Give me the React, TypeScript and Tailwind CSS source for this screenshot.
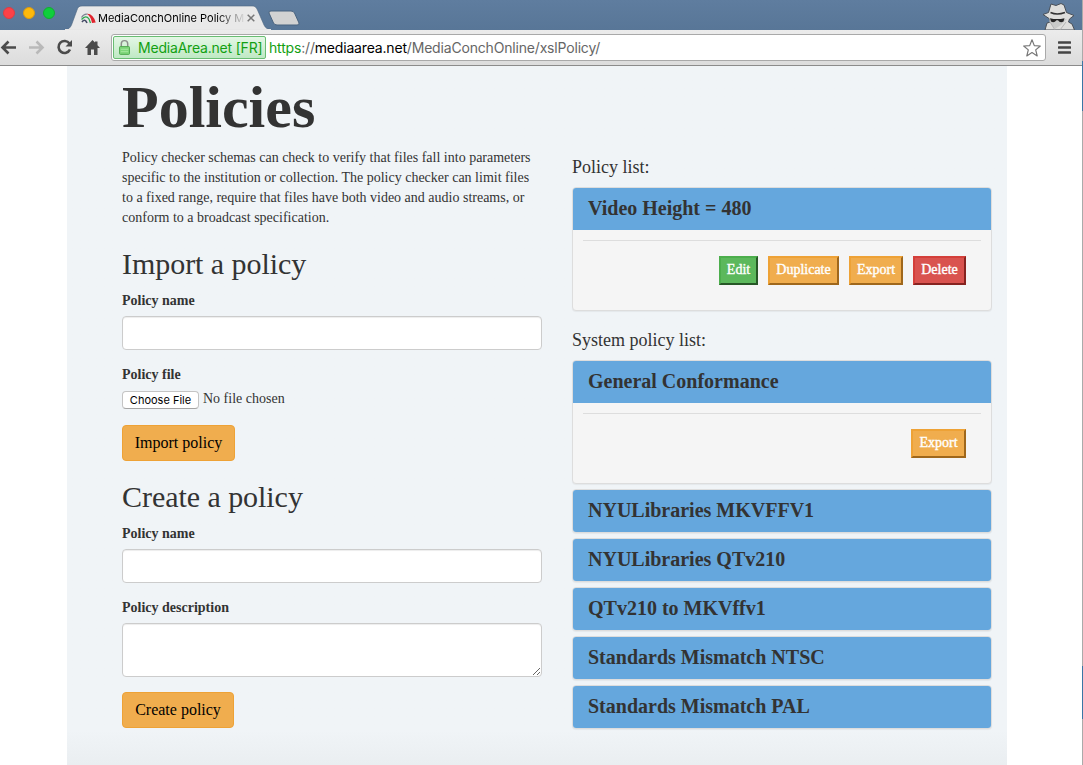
import type { ReactNode } from 'react';

function Tab() {
  return (
    <div className="relative flex h-[30px] w-[208px] items-start">
      <svg className="absolute inset-0" width="208" height="30" viewBox="0 0 208 30">
        <path d="M0 29.5 C4 29 5 28 6.500 25 L12 10 C13 7 14 6 17 6 L187 6 C190 6 191 7 192.500 10 L199 25 C200.500 28 202 29 206 29.500 Z" fill="#e9e9e9" stroke="#4b6480" strokeWidth="0.6" />
        <path d="M0 29 H206 V30 H0 Z" fill="#e6e6e6" />
      </svg>
      <div className="relative flex h-[25px] w-full items-center pt-[11px] pl-[16px]">
        <svg className="shrink-0" width="15" height="11" viewBox="0 0 15 11" fill="none">
          <path d="M.5 4.500 Q3 .5 6.500 1.300" stroke="#7d8592" strokeWidth="1.100" />
          <path d="M.5 6.500 Q5 1.500 8 6 L9.500 10" stroke="#2fa84f" strokeWidth="1.300" />
          <path d="M1 9 Q4 5 6 10" stroke="#454b66" strokeWidth="1.600" />
          <path d="M6 .8 Q12 .5 14.700 9.500 L11 10 Q10 4 6 .8Z" fill="#e0232c" />
        </svg>
        <div className="ml-0.5 w-[149px] shrink-0 whitespace-nowrap font-['Inter',sans-serif] text-[11px] leading-[14px] text-black [mask-image:linear-gradient(to_right,black_118px,transparent_148px)]">
          MediaConchOnline Policy M
        </div>
        <svg className="shrink-0" width="8" height="8" viewBox="0 0 8 8" stroke="#777" strokeWidth="1.500">
          <path d="M.7.7 7.300 7.300M7.300.7.7 7.300" />
        </svg>
      </div>
    </div>
  );
}

function TitleBar() {
  return (
    <div className="flex h-[30px] bg-linear-to-b from-[#5f7d9f] to-[#587697]">
      <div className="flex w-[65px] gap-[8px] pt-[7px] pl-[3px]">
        <span className="size-3 shrink-0 rounded-full border border-[#dc3d43] bg-[#fc4148]" />
        <span className="size-3 shrink-0 rounded-full border border-[#dc9b10] bg-[#fdb90b]" />
        <span className="size-3 shrink-0 rounded-full border border-[#12ae30] bg-[#0fce3c]" />
      </div>
      <Tab />
      <svg className="-ml-[5px] mt-[10px]" width="32" height="16" viewBox="0 0 32 16">
        <path d="M3 1 H23 Q25.500 1 26.500 3 L31 13 Q31.500 15 29 15 H9 Q6.500 15 5.500 13 L1 3 Q.5 1 3 1Z" fill="#d2d2d2" stroke="#48627e" />
      </svg>
      <svg className="mt-[2px] mr-[6px] ml-auto" width="34" height="28" viewBox="0 0 34 28">
        <path d="M6.500 10.500 L9 2 L14 3.500 L19 1.500 L22 3 L24.500 10.500 L32 13.500 L27.500 17 L26.500 20 L30 22 L32.500 28 H3 L5 21 L8.500 20 L7 16.500 L1 12.500Z" fill="#dededc" stroke="#4a5058" strokeWidth="1" />
        <path d="M7.500 17 V20 L13 27 L19 23 L25 17Z" fill="#c9cac9" />
        <path d="M8.500 10.500 Q15 13.500 23 10.500" stroke="#333" strokeWidth="1.400" fill="none" />
        <path d="M8 16.200 Q15 18 22.500 16.200 L21.500 19.500 Q18 21.500 16 18.200 H14.500 Q12 21.500 9 19.500Z" fill="#252525" />
        <path d="M8 20 L13 28 M24 20 L18 28" stroke="#aaa" strokeWidth="0.800" />
      </svg>
    </div>
  );
}

function Toolbar() {
  return (
    <div className="flex h-9 items-center border-b border-[#8b8b8b] bg-linear-to-b from-[#ececec] to-[#dcdcdc]">
      <svg width="111" height="35" viewBox="0 0 111 35" fill="none">
        <path d="M16 17.500H3M8.500 11.500 2.500 17.500 8.500 23.500" stroke="#4b4b4b" strokeWidth="2.600" />
        <path d="M29 17.500H42M36.500 11.500 42.500 17.500 36.500 23.500" stroke="#b9b9b9" strokeWidth="2.600" />
        <path d="M69.500 13.500A6 6 0 1 0 70 19.500" stroke="#4b4b4b" strokeWidth="2.600" />
        <path d="M72 10V16.500H65.500Z" fill="#4b4b4b" />
        <path d="M85 18 92.500 10 95 12.500V11.500H97.500V15.200L100 18H97.500V25H94V19.500H91V25H87.500V18Z" fill="#4b4b4b" />
      </svg>
      <div className="flex h-[27px] w-[935px] items-center rounded-[3px] border border-[#a9a9a9] bg-white font-['Inter',sans-serif] text-[14px] whitespace-nowrap">
        <div className="ml-px flex h-[23px] w-[153px] items-center rounded-[2px] border border-[#69bd73] bg-linear-to-b from-[#e4f7e5] to-[#bfe9c4] pl-[5px]">
          <svg width="11" height="17" viewBox="0 0 12 17">
            <path d="M2.500 8V4.500a3.500 3.500 0 0 1 7 0V8" fill="none" stroke="#8a8f8a" strokeWidth="1.600" />
            <rect x=".5" y="7.500" width="11" height="8.500" rx="1" fill="#7ed67a" stroke="#4aa54a" />
            <path d="M2 10.500H10M2 13H10" stroke="#a5e8a0" />
          </svg>
          <span className="ml-[8px] tracking-[-0.2px] text-[#12a012]">MediaArea.net [FR]</span>
        </div>
        <span className="ml-[3px] tracking-[-0.18px] text-[#666]">
          <span className="text-[#12a012]">https</span>://<span className="text-black">mediaarea.net</span>/MediaConchOnline/xslPolicy/
        </span>
        <svg className="mr-[3px] ml-auto" width="20" height="20" viewBox="0 0 20 20">
          <path d="M10 1.800 12.300 7.600 18.300 8 13.700 11.900 15.200 17.900 10 14.600 4.800 17.900 6.300 11.900 1.700 8 7.700 7.600Z" fill="#fff" stroke="#777" strokeWidth="1.200" strokeLinejoin="round" />
        </svg>
      </div>
      <svg className="ml-3" width="13" height="13" viewBox="0 0 13 13">
        <path d="M1 1.500H12M1 6.500H12M1 11.500H12" stroke="#444" strokeWidth="2.600" strokeLinecap="round" />
      </svg>
    </div>
  );
}

const tones = {
  green: 'border-t-[#4cae4c] border-l-[#4cae4c] border-r-[#265726] border-b-[#265726] bg-[#5cb85c]',
  orange: 'border-t-[#eea236] border-l-[#eea236] border-r-[#9f671b] border-b-[#9f671b] bg-[#f0ad4e]',
  red: 'border-t-[#d43f3a] border-l-[#d43f3a] border-r-[#862320] border-b-[#862320] bg-[#d9534f]',
};

function Action({ tone, width, children }: { tone: keyof typeof tones; width: string; children: ReactNode }) {
  return (
    <button className={`h-[29px] border-2 pb-[2px] text-center text-[14px] leading-[23px] text-white [-webkit-text-stroke:0.4px_white] ${width} ${tones[tone]}`}>
      {children}
    </button>
  );
}

function Panel({ title, children }: { title: string; children?: ReactNode }) {
  return (
    <section className="mb-[5px] overflow-hidden rounded-[4px] border border-[#ddd] bg-[#f5f5f5] shadow-[0_1px_1px_rgba(0,0,0,0.05)]">
      <h4 className="h-[42px] bg-[#65a7dd] pl-[15px] text-[20px] leading-[41px] font-bold">{title}</h4>
      {children && (
        <div className="h-20 px-2.5 pt-2.5">
          <div className="flex justify-end gap-2.5 border-t border-[#ddd] pt-[15px] pr-[15px]">{children}</div>
        </div>
      )}
    </section>
  );
}

const field = 'block w-full rounded-[4px] border border-[#ccc] bg-white shadow-[inset_0_1px_1px_rgba(0,0,0,0.075)]';
const submit = 'block h-9 rounded-[4px] border border-[#eea236] bg-[#f0ad4e] text-[16px] leading-[34px] text-black';

function Forms() {
  return (
    <div className="w-[420px] shrink-0">
      <p className="h-[100px] pt-px text-[14px] leading-5 whitespace-nowrap">
        Policy checker schemas can check to verify that files fall into parameters<br />
        specific to the institution or collection. The policy checker can limit files<br />
        to a fixed range, require that files have both video and audio streams, or<br />
        conform to a broadcast specification.
      </p>
      <h2 className="mb-[11px] text-[30px] leading-[33px] tracking-[-0.05px]">Import a policy</h2>
      <label className="mb-[5px] block text-[14px] leading-5 font-bold">Policy name</label>
      <input className={`${field} mb-[15px] h-[34px]`} />
      <label className="mb-[5px] block text-[14px] leading-5 font-bold">Policy file</label>
      <div className="flex h-[35px] items-start gap-1 text-[14px]">
        <button className="mt-px h-[18px] w-[77px] rounded-[4px] border border-[#c4c4c4] border-b-[#a5a5a5] bg-white font-['Inter',sans-serif] text-[11px] leading-[16px] text-black">Choose File</button>
        <span className="leading-[17px]">No file chosen</span>
      </div>
      <button className={`${submit} w-[113px]`}>Import policy</button>
      <h2 className="mt-[19px] mb-[11px] text-[30px] leading-[33px] tracking-[-0.05px]">Create a policy</h2>
      <label className="mb-[5px] block text-[14px] leading-5 font-bold">Policy name</label>
      <input className={`${field} mb-[15px] h-[34px]`} />
      <label className="mb-[5px] block text-[14px] leading-5 font-bold">Policy description</label>
      <textarea className={`${field} mb-[15px] h-[54px] resize-y`} />
      <button className={`${submit} w-[112px]`}>Create policy</button>
    </div>
  );
}

function PolicyLists() {
  return (
    <div className="w-[420px] shrink-0 pt-[10px]">
      <h3 className="mb-2.5 text-[18px] leading-5">Policy list:</h3>
      <Panel title="Video Height = 480">
        <Action tone="green" width="w-[39px]">Edit</Action>
        <Action tone="orange" width="w-[71px]">Duplicate</Action>
        <Action tone="orange" width="w-[54px]">Export</Action>
        <Action tone="red" width="w-[53px]">Delete</Action>
      </Panel>
      <h3 className="mt-[19px] mb-2.5 text-[18px] leading-5">System policy list:</h3>
      <Panel title="General Conformance">
        <Action tone="orange" width="w-[55px]">Export</Action>
      </Panel>
      <Panel title="NYULibraries MKVFFV1" />
      <Panel title="NYULibraries QTv210" />
      <Panel title="QTv210 to MKVffv1" />
      <Panel title="Standards Mismatch NTSC" />
      <Panel title="Standards Mismatch PAL" />
    </div>
  );
}

export default function App() {
  return (
    <div className="flex h-[765px] w-[1083px] overflow-hidden bg-white">
      <div className="w-[1082px]">
        <TitleBar />
        <Toolbar />
        <main className="ml-[67px] h-[699px] w-[940px] bg-linear-to-b from-[#f0f4f7] from-95% to-[#eaeef1] pt-2 pr-[15px] pl-[55px] font-['Liberation_Serif',serif] text-[#333]">
          <h1 className="h-[73px] text-[60px] leading-[66px] font-bold">Policies</h1>
          <div className="flex gap-[30px]">
            <Forms />
            <PolicyLists />
          </div>
        </main>
      </div>
      <div className="flex w-px flex-col bg-[#aaa]">
        <div className="h-[61px]" />
        <div className="h-[50px] bg-[#3a76a5]" />
        <div className="h-[555px]" />
        <div className="h-[53px] bg-[#3a76a5]" />
      </div>
    </div>
  );
}
